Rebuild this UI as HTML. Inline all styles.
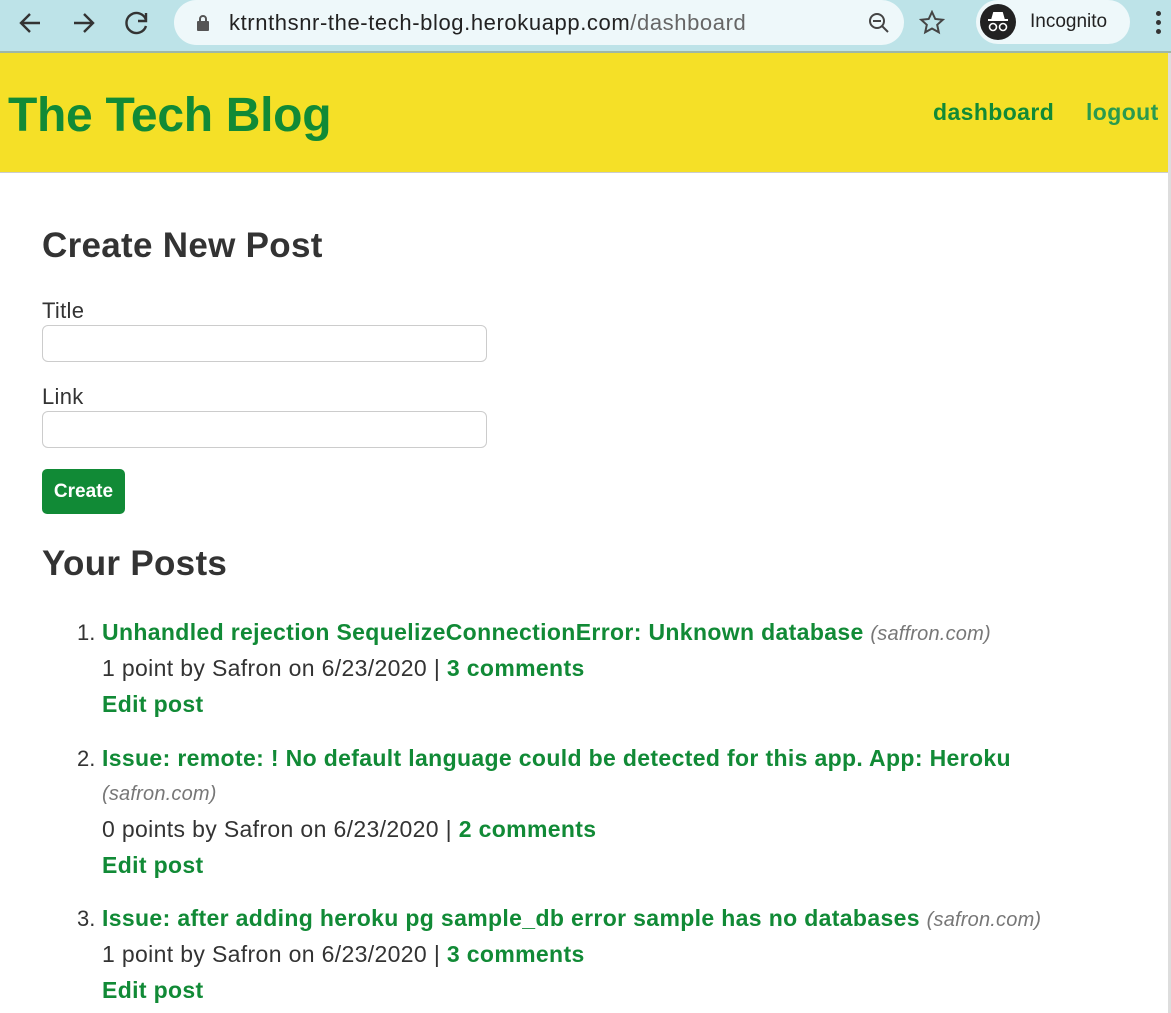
<!DOCTYPE html>
<html><head><style>
body{margin:0;width:1171px;height:1013px;overflow:hidden;font-family:"Liberation Sans",sans-serif;background:#fff;color:#333}
.bar{position:absolute;top:0;left:0;width:1171px;height:51px;background:#bde3e8;border-bottom:2px solid #9fb7a8}
.url{position:absolute;left:174px;top:0;width:730px;height:45px;background:#eef8fa;border-radius:23px}
.url span{position:absolute;left:55px;top:10px;font-size:22px;color:#222;letter-spacing:0.6px}
.inc{position:absolute;left:976px;top:0;width:154px;height:44px;background:#eef8fa;border-radius:22px}
.hdr{position:absolute;top:53px;left:0;width:1168px;height:119px;background:#f5e027;border-bottom:1px solid #ccc}
.hdr h1{position:absolute;left:8px;top:35px;margin:0;font-size:48px;color:#118a36;letter-spacing:-0.3px}
.nav{position:absolute;top:46px;font-size:23px;font-weight:bold;color:#118a36;letter-spacing:0.4px}
h2{position:absolute;left:42px;margin:0;font-size:35px;color:#333;letter-spacing:0.3px}
label{position:absolute;left:42px;font-size:22px;letter-spacing:0.3px}
.in{position:absolute;left:42px;width:443px;height:35px;border:1px solid #ccc;border-radius:6px}
.btn{position:absolute;left:42px;top:469px;width:83px;height:45px;background:#118a36;color:#fff;border-radius:5px;font-weight:bold;font-size:19px;text-align:center;line-height:45px}
.p{position:absolute;left:102px;font-size:23px;white-space:nowrap;letter-spacing:0.35px}
.g{color:#118a36;font-weight:bold}
.d{color:#777;font-style:italic;font-size:20px;letter-spacing:0.2px}
.n{position:absolute;left:77px;font-size:22px}
</style></head><body>
<div class="bar">
<svg style="position:absolute;left:18px;top:10px" width="130" height="26" viewBox="0 0 130 26" fill="none" stroke="#333" stroke-width="2.4"><path d="M22 13H4M12 4L3 13l9 9"/><path d="M56 13h18M66 4l9 9-9 9"/><path d="M128 10a10 10 0 1 0 0 6"/><path d="M128 3v8h-8"/></svg>
<div class="url"><svg style="position:absolute;left:22px;top:14px" width="14" height="18"><rect x="1" y="7" width="12" height="10" rx="1" fill="#555"/><path d="M4 7V5a3 3 0 0 1 6 0v2" stroke="#555" stroke-width="2" fill="none"/></svg><span>ktrnthsnr-the-tech-blog.herokuapp.com<span style="position:static;color:#666">/dashboard</span></span>
<svg style="position:absolute;left:693px;top:11px" width="24" height="24" fill="none" stroke="#444" stroke-width="2"><circle cx="10" cy="10" r="7"/><path d="M15 15l6 6M6 10h8"/></svg>
<svg style="position:absolute;left:745px;top:10px" width="26" height="26" fill="none" stroke="#444" stroke-width="2"><path d="M13 2l3.3 7 7.5.8-5.6 5 1.6 7.5L13 18.5 6.2 22.3 7.8 14.8 2.2 9.8l7.5-.8z"/></svg></div>
<div class="inc"><div style="position:absolute;left:4px;top:4px;width:36px;height:36px;border-radius:50%;background:#222"></div><svg style="position:absolute;left:8px;top:10px" width="28" height="24"><path d="M4 10h20M8 10l2-7h8l2 7" stroke="#fff" stroke-width="2" fill="#fff"/><circle cx="9" cy="17" r="3.5" stroke="#fff" stroke-width="1.6" fill="none"/><circle cx="19" cy="17" r="3.5" stroke="#fff" stroke-width="1.6" fill="none"/></svg><span style="position:absolute;left:54px;top:11px;font-size:19px;color:#222">Incognito</span></div>
<div style="position:absolute;left:1156px;top:11px;width:5px;height:5px;border-radius:50%;background:#333;box-shadow:0 9px 0 #333,0 18px 0 #333"></div>
</div>
<div class="hdr"><h1>The Tech Blog</h1><div class="nav" style="left:933px">dashboard</div><div class="nav" style="left:1086px;color:#2a9a4e">logout</div></div>
<h2 style="top:226px">Create New Post</h2>
<label style="top:298px">Title</label><div class="in" style="top:325px"></div>
<label style="top:384px">Link</label><div class="in" style="top:411px"></div>
<div class="btn">Create</div>
<h2 style="top:544px">Your Posts</h2>
<div class="n" style="top:620px">1.</div>
<div class="p" style="top:619px"><span class="g">Unhandled rejection SequelizeConnectionError: Unknown database</span> <span class="d">(saffron.com)</span></div>
<div class="p" style="top:655px">1 point by Safron on 6/23/2020 | <span class="g">3 comments</span></div>
<div class="p g" style="top:691px">Edit post</div>
<div class="n" style="top:746px">2.</div>
<div class="p" style="top:745px"><span class="g">Issue: remote: ! No default language could be detected for this app. App: Heroku</span></div>
<div class="p d" style="top:783px">(safron.com)</div>
<div class="p" style="top:816px">0 points by Safron on 6/23/2020 | <span class="g">2 comments</span></div>
<div class="p g" style="top:852px">Edit post</div>
<div class="n" style="top:906px">3.</div>
<div class="p" style="top:905px"><span class="g">Issue: after adding heroku pg sample_db error sample has no databases</span> <span class="d">(safron.com)</span></div>
<div class="p" style="top:941px">1 point by Safron on 6/23/2020 | <span class="g">3 comments</span></div>
<div class="p g" style="top:977px">Edit post</div>
<div style="position:absolute;left:1168px;top:53px;width:3px;height:960px;background:#ddd"></div>
</body></html>
